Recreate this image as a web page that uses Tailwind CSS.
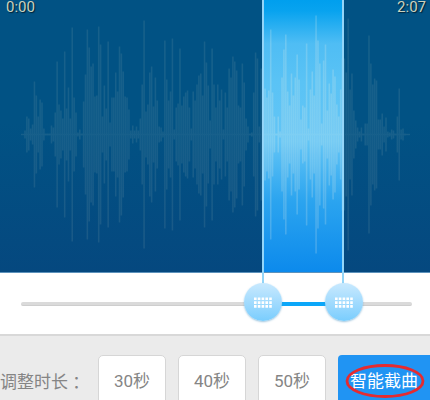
<!DOCTYPE html>
<html lang="zh-CN">
<head>
    <meta charset="UTF-8">
    <meta name="viewport" content="width=device-width, initial-scale=1.0">
    <title>智能截曲</title>
    <script src="https://cdn.jsdelivr.net/npm/@tailwindcss/browser@4"></script>
</head>
<body class="flex flex-col h-screen overflow-hidden bg-[#ebebeb] font-[Roboto,'Noto_Sans_CJK_SC',sans-serif]">
    <main class="relative shrink-0">
        <!-- Waveform -->
        <section class="relative h-[273px] border-b border-[#5d92bb] bg-linear-to-b from-[#015284] from-45% to-[#05487f]">
            <div class="absolute inset-y-0 left-[61%] right-[20%] bg-[linear-gradient(to_bottom,#009fee_0%,#08a3ef_4%,#4fbdf4_16%,#5ac3f5_30%,#62c5f6_52%,#2ba4ef_74%,#0c8aec_100%)]"></div>
            <svg class="absolute inset-0 w-full h-full" viewBox="0 0 430 272" preserveAspectRatio="none" aria-hidden="true">
                <defs>
                    <clipPath id="selected"><rect x="263" y="0" width="80" height="272"/></clipPath>
                </defs>
                <path class="wave" fill="none" stroke="#fff0d8" stroke-opacity=".09" stroke-width="1.6"/>
                <path class="wave" fill="none" stroke="#fff" stroke-opacity=".11" stroke-width="1.6" clip-path="url(#selected)"/>
            </svg>
            <div class="relative flex justify-between pl-[6px] pr-1 text-[15px] leading-[15px] text-[#cbd2bd] [text-shadow:1px_1px_1px_#00000099]">
                <span>0:00</span>
                <span>2:07</span>
            </div>
        </section>

        <!-- Range slider -->
        <section class="relative flex items-center h-[63px] pl-[21px] pr-[18px] bg-white border-b-2 border-[#d8d8d8]">
            <div class="w-full h-1 rounded-full bg-[#dadada] border-b border-[#cecece]"></div>
            <div class="absolute left-[61%] right-[20%] top-[29px] h-1 bg-[#0ba7f9]"></div>
            <input type="range" aria-label="开始" min="0" max="127" step="any" value="80.2" class="absolute left-[21px] right-[18px] top-[10px] h-[38px] z-10 appearance-none bg-transparent pointer-events-none [&::-webkit-slider-thumb]:pointer-events-auto [&::-webkit-slider-thumb]:appearance-none [&::-webkit-slider-thumb]:size-[38px] [&::-webkit-slider-thumb]:rounded-full [&::-webkit-slider-thumb]:bg-linear-to-b [&::-webkit-slider-thumb]:from-[#c8e9fe] [&::-webkit-slider-thumb]:to-[#79cdfd] [&::-webkit-slider-thumb]:shadow-[0_1px_2px_#5a9cc899]">
            <input type="range" aria-label="结束" min="0" max="127" step="any" value="109.2" class="absolute left-[21px] right-[18px] top-[10px] h-[38px] z-10 appearance-none bg-transparent pointer-events-none [&::-webkit-slider-thumb]:pointer-events-auto [&::-webkit-slider-thumb]:appearance-none [&::-webkit-slider-thumb]:size-[38px] [&::-webkit-slider-thumb]:rounded-full [&::-webkit-slider-thumb]:bg-linear-to-b [&::-webkit-slider-thumb]:from-[#c8e9fe] [&::-webkit-slider-thumb]:to-[#79cdfd] [&::-webkit-slider-thumb]:shadow-[0_1px_2px_#5a9cc899]">
            <!-- Grip dots -->
            <svg class="absolute z-20 left-[61.2%] top-6 -ml-[9px] pointer-events-none" width="18" height="12" viewBox="0 0 18 12" stroke="#fff" stroke-width="2.6" stroke-dasharray="2.6 1.2" aria-hidden="true">
                <path d="M0 1.8H18M0 5.6H18M0 9.4H18"/>
            </svg>
            <svg class="absolute z-20 left-[79.9%] top-6 -ml-[9px] pointer-events-none" width="18" height="12" viewBox="0 0 18 12" stroke="#fff" stroke-width="2.6" stroke-dasharray="2.6 1.2" aria-hidden="true">
                <path d="M0 1.8H18M0 5.6H18M0 9.4H18"/>
            </svg>
        </section>

        <!-- Selection edges, running down to the handles -->
        <div class="absolute top-0 left-[61%] h-[284px] w-[2px] bg-[#93d5f8]"></div>
        <div class="absolute top-0 right-[20%] h-[284px] w-[2px] bg-[#93d5f8]"></div>
    </main>

    <!-- Duration -->
    <section class="flex items-start shrink-0 pt-[19px] text-[17px] text-[#858585]">
        <span class="w-[98px] shrink-0 h-[54px] leading-[54px] whitespace-nowrap">调整时长 ：</span>
        <div class="flex flex-1 gap-[12px]">
            <button type="button" class="w-[68px] h-[54px] shrink-0 rounded-[5px] border border-[#d6d6d6] bg-white">30秒</button>
            <button type="button" class="w-[68px] h-[54px] shrink-0 rounded-[5px] border border-[#d6d6d6] bg-white">40秒</button>
            <button type="button" class="w-[68px] h-[54px] shrink-0 rounded-[5px] border border-[#d6d6d6] bg-white">50秒</button>
            <button type="button" class="relative flex-1 h-[54px] pl-3 text-left whitespace-nowrap rounded-l-[4px] bg-[#2094f3] text-white">
                智能截曲
                <svg class="absolute left-[7px] top-2 w-20 h-9" viewBox="0 0 80 36" fill="none" stroke="#e52b30" stroke-width="2.8" aria-hidden="true">
                    <ellipse cx="40" cy="18" rx="38" ry="15.5"/>
                </svg>
            </button>
        </div>
    </section>

    <script>
        // half height of each bar, left to right
        var peaks = [
            4, 18, 16, 6, 10, 53, 39, 18, 35, 32, 6, 1, 1, 1, 9, 7, 22, 73, 30, 24,
            16, 83, 26, 47, 16, 107, 37, 22, 2, 5, 1, 33, 60, 105, 87, 68, 71, 38, 39, 108,
            90, 18, 49, 26, 93, 12, 37, 37, 62, 43, 88, 81, 63, 38, 37, 25, 4, 9, 4, 8,
            4, 16, 50, 114, 23, 30, 62, 68, 28, 57, 34, 8, 7, 3, 94, 55, 34, 43, 96, 5,
            27, 31, 86, 29, 38, 42, 44, 27, 6, 43, 34, 50, 59, 61, 39, 93, 72, 49, 14, 86,
            50, 27, 50, 34, 45, 5, 42, 27, 66, 57, 78, 73, 64, 29, 27, 71, 52, 16, 8, 1,
            2, 42, 82, 76, 8, 66, 84, 46, 37, 44, 105, 42, 18, 1, 18, 3, 57, 85, 100, 43,
            29, 61, 39, 57, 80, 55, 15, 29, 27, 91, 6, 45, 63, 39, 119, 94, 71, 11, 74, 90,
            24, 51, 41, 65, 58, 30, 18, 45, 76, 76, 62, 116, 45, 61, 24, 14, 7, 3, 7, 1,
            11, 11, 99, 71, 50, 56, 54, 15, 15, 21, 8, 17, 3, 2, 5, 4, 1, 18, 46, 5,
            6, 1
        ];
        var d = 'M21 134.5H410';
        peaks.forEach(function (peak, i) {
            d += 'M' + (25 + i * 1.89).toFixed(2) + ' ' + (134.5 - peak) + 'v' + peak * 2;
        });
        document.querySelectorAll('.wave').forEach(function (path) {
            path.setAttribute('d', d);
        });
    </script>
</body>
</html>
